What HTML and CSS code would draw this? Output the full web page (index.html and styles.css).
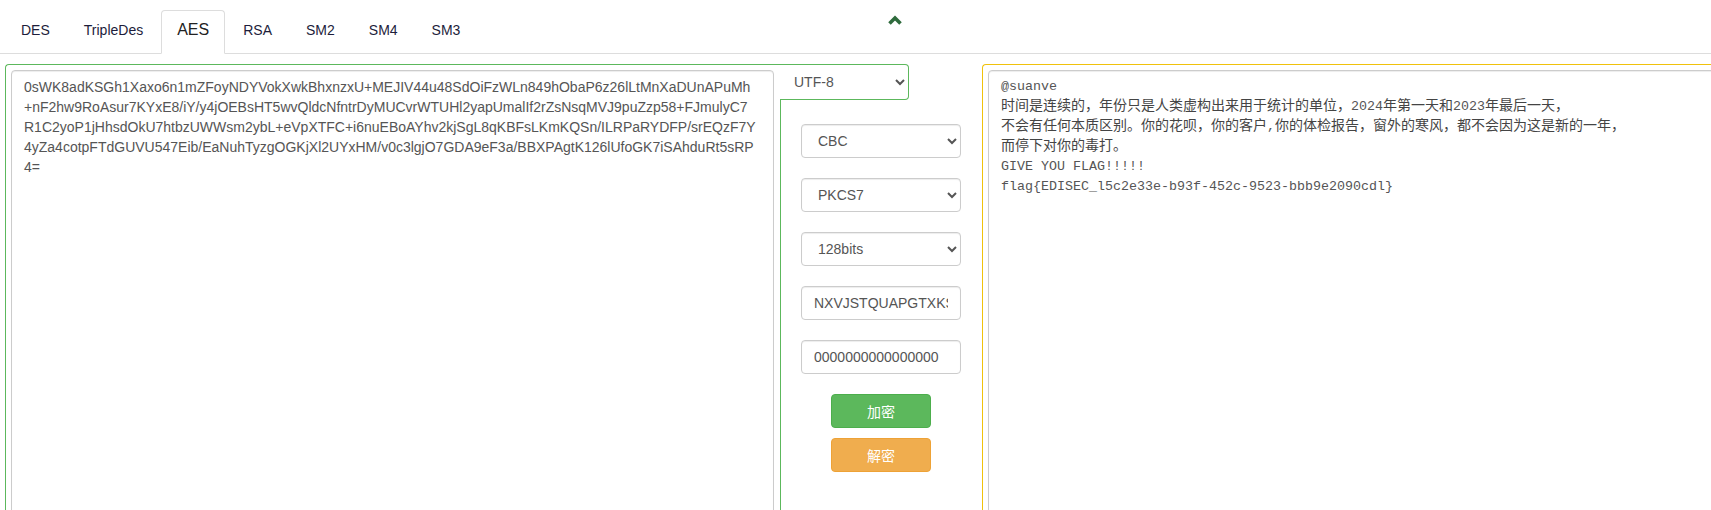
FILE: index.html
```html
<!DOCTYPE html>
<html lang="zh-CN">
<head>
<meta charset="utf-8">
<title>AES</title>
<link rel="stylesheet" href="styles.css">
</head>
<body>
<nav class="tabs">
  <a class="tab">DES</a>
  <a class="tab">TripleDes</a>
  <a class="tab active">AES</a>
  <a class="tab">RSA</a>
  <a class="tab">SM2</a>
  <a class="tab">SM4</a>
  <a class="tab">SM3</a>
  <span class="toggle"><svg width="14" height="10" viewBox="0 0 14 10"><path d="M1.5 8.5 L7 3 L12.5 8.5" fill="none" stroke="#2f6b3d" stroke-width="3.6"/></svg></span>
</nav>
<main class="work">
  <section class="src">
    <textarea class="box src-text">0sWK8adKSGh1Xaxo6n1mZFoyNDYVokXwkBhxnzxU+MEJIV44u48SdOiFzWLn849hObaP6z26lLtMnXaDUnAPuMh
+nF2hw9RoAsur7KYxE8/iY/y4jOEBsHT5wvQldcNfntrDyMUCvrWTUHl2yapUmalIf2rZsNsqMVJ9puZzp58+FJmulyC7
R1C2yoP1jHhsdOkU7htbzUWWsm2ybL+eVpXTFC+i6nuEBoAYhv2kjSgL8qKBFsLKmKQSn/ILRPaRYDFP/srEQzF7Y
4yZa4cotpFTdGUVU547Eib/EaNuhTyzgOGKjXl2UYxHM/v0c3lgjO7GDA9eF3a/BBXPAgtK126lUfoGK7iSAhduRt5sRP
4=</textarea>
  </section>
  <section class="ctrl">
    <div class="charset">
      <select class="charset-sel"><option>UTF-8</option></select>
    </div>
    <div class="opts">
      <select class="field"><option>CBC</option></select>
      <select class="field"><option>PKCS7</option></select>
      <select class="field"><option>128bits</option></select>
      <input class="field" value="NXVJSTQUAPGTXKSU">
      <input class="field" value="0000000000000000">
      <button class="btn btn-enc">加密</button>
      <button class="btn btn-dec">解密</button>
    </div>
  </section>
  <section class="dst">
    <div class="box output">@suanve
<span class="zh">时间是连续的，年份只是人类虚构出来用于统计的单位，</span>2024<span class="zh">年第一天和</span>2023<span class="zh">年最后一天，</span>
<span class="zh">不会有任何本质区别。你的花呗，你的客户</span>,<span class="zh">你的体检报告，窗外的寒风，都不会因为这是新的一年，</span>
<span class="zh">而停下对你的毒打。</span>
GIVE YOU FLAG!!!!!
flag{EDISEC_l5c2e33e-b93f-452c-9523-bbb9e2090cdl}</div>
  </section>
</main>
</body>
</html>
```
FILE: styles.css
```css
html, body {
  margin: 0;
  padding: 0;
  background: #fff;
  overflow: hidden;
}
body {
  font-family: "Liberation Sans", Arial, sans-serif;
  font-size: 14px;
  color: #333;
}

.tabs {
  display: flex;
  align-items: flex-end;
  padding: 10px 0 0 5px;
  border-bottom: 1px solid #ddd;
}
.tab {
  margin: 0 2px -1px 0;
  padding: 8px 15px 12px;
  line-height: 22px;
  border: 1px solid transparent;
  border-radius: 4px 4px 0 0;
  color: #1d1d3b;
  font-size: 14px;
  cursor: pointer;
}
.tab.active {
  border-color: #ddd #ddd transparent;
  background: #fff;
  color: #222;
  font-size: 16px;
}
.toggle {
  align-self: flex-start;
  margin: 5px 0 0 410px;
  line-height: 0;
}

.work {
  display: flex;
  margin-top: 10px;
  padding-left: 5px;
  height: 470px;
}

.box {
  box-sizing: border-box;
  border: 1px solid #ccc;
  border-radius: 4px;
  box-shadow: inset 0 1px 1px rgba(0, 0, 0, .075);
  padding: 6px 12px;
  color: #555;
  background: #fff;
  line-height: 20px;
}

.src {
  flex: none;
  box-sizing: border-box;
  width: 775px;
  border-top: 1px solid #5cb85c;
  border-left: 1px solid #5cb85c;
  border-top-left-radius: 4px;
  padding: 5px 6px 0 5px;
}
.src-text {
  display: block;
  width: 763px;
  height: 480px;
  resize: none;
  font-family: "Liberation Sans", Arial, sans-serif;
  font-size: 14px;
  white-space: pre;
  overflow: hidden;
}

.ctrl {
  flex: none;
  width: 202px;
  display: flex;
  flex-direction: column;
}
.charset {
  box-sizing: border-box;
  width: 129px;
  height: 36px;
  border: 1px solid #5cb85c;
  border-left: none;
  border-radius: 0 4px 4px 0;
}
.charset-sel {
  width: 100%;
  height: 34px;
  border: none;
  background: transparent;
  font-family: "Liberation Sans", Arial, sans-serif;
  font-size: 14px;
  color: #555;
  padding: 0 0 0 10px;
}
.opts {
  flex: 1;
  display: flex;
  flex-direction: column;
  align-items: flex-start;
  border-left: 1px solid #5cb85c;
  padding: 24px 0 0 20px;
}
.field {
  box-sizing: border-box;
  width: 160px;
  height: 34px;
  margin-bottom: 20px;
  padding: 6px 12px;
  border: 1px solid #ccc;
  border-radius: 4px;
  background: #fff;
  box-shadow: inset 0 1px 1px rgba(0, 0, 0, .075);
  font-family: "Liberation Sans", Arial, sans-serif;
  font-size: 14px;
  color: #555;
}
select.field {
  padding-left: 12px;
}
.btn {
  box-sizing: border-box;
  width: 100px;
  height: 34px;
  margin-left: 30px;
  border: 1px solid;
  border-radius: 4px;
  color: #fff;
  font-family: "Liberation Sans", "Noto Sans CJK SC", sans-serif;
  font-size: 14px;
  cursor: pointer;
}
.btn-enc {
  background: #5cb85c;
  border-color: #4cae4c;
}
.btn-dec {
  margin-top: 10px;
  background: #f0ad4e;
  border-color: #eea236;
}

.dst {
  flex: none;
  box-sizing: border-box;
  width: 800px;
  border-top: 1px solid #f0c20c;
  border-left: 1px solid #f0c20c;
  border-top-left-radius: 4px;
  padding: 5px 0 0 5px;
}
.output {
  width: 790px;
  height: 480px;
  font-family: "Liberation Mono", "Courier New", monospace;
  font-size: 13.333px;
  white-space: pre;
}
.zh {
  font-family: "Noto Sans CJK SC", sans-serif;
  font-size: 14px;
  line-height: 1;
  color: #444;
}
```
